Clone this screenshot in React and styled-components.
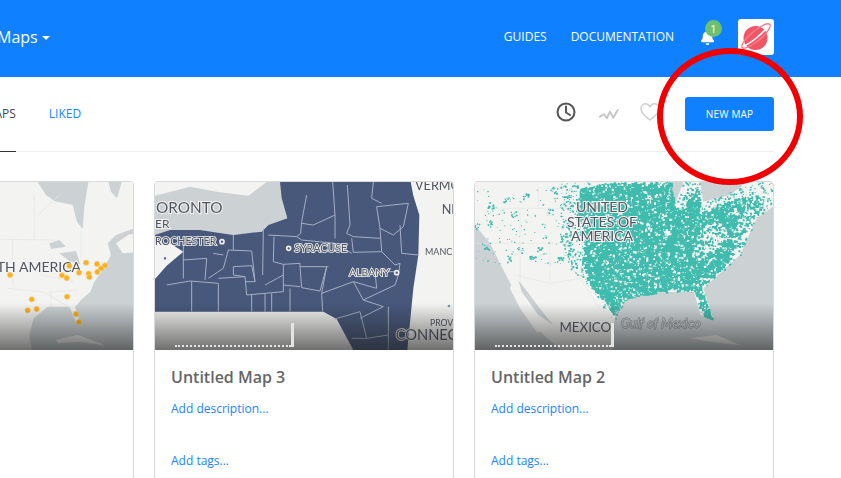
import React from 'react';
import styled, { createGlobalStyle } from 'styled-components';
import { FaBell } from 'react-icons/fa';

const GlobalStyle = createGlobalStyle`
  html, body {
    margin: 0;
    padding: 0;
    background: #fff;
    font-family: "Open Sans", "Liberation Sans", sans-serif;
  }
`;

const Page = styled.div`
  position: relative;
  width: 841px;
  height: 478px;
  overflow: hidden;
`;

const Header = styled.header`
  box-sizing: border-box;
  height: 77px;
  background: #0f80ff;
  display: flex;
  align-items: center;
  justify-content: space-between;
  padding: 0 67px 4px 0;
  color: #fff;
`;

const Brand = styled.div`
  display: flex;
  align-items: center;
  gap: 4px;
  margin-left: -3px;
  font-size: 16px;
`;

const Caret = styled.span`
  width: 0;
  height: 0;
  margin-top: 2px;
  border-left: 4px solid transparent;
  border-right: 4px solid transparent;
  border-top: 4px solid #fff;
`;

const Nav = styled.nav`
  display: flex;
  align-items: center;
`;

const NavLink = styled.a`
  font-size: 12px;
  font-weight: 500;
  margin-right: 24px;
`;

const Bell = styled.div`
  position: relative;
  width: 18px;
  height: 18px;
  margin: 2px 22px 0 0;
  font-size: 15px;
  display: flex;
  align-items: center;
  justify-content: center;
`;

const Badge = styled.span`
  position: absolute;
  top: -9px;
  left: 7px;
  width: 17px;
  height: 17px;
  border-radius: 50%;
  background: #6cc070;
  font-size: 11px;
  line-height: 17px;
  text-align: center;
`;

const Avatar = styled.div`
  width: 36px;
  height: 36px;
  border-radius: 3px;
  background: #fff;
  overflow: hidden;
`;

const Main = styled.main`
  width: 940px;
  margin-left: -166px;
`;

const TabBar = styled.div`
  height: 74px;
  display: flex;
  align-items: stretch;
  justify-content: space-between;
  border-bottom: 1px solid #eee;
`;

const Tabs = styled.div`
  display: flex;
  gap: 33px;
  padding-left: 129px;
`;

const Tab = styled.a`
  display: flex;
  align-items: center;
  height: 72px;
  padding-bottom: 2px;
  font-size: 12px;
  font-weight: 500;
  color: ${(p) => (p.$active ? '#444' : '#1a86ff')};
  border-bottom: 1px solid ${(p) => (p.$active ? '#333' : 'transparent')};
`;

const Tools = styled.div`
  display: flex;
  align-items: center;
  gap: 21px;
`;

const ToolIcon = styled.svg`
  width: 20px;
  height: 20px;
  margin-bottom: ${(p) => p.$lift || 0}px;
  margin-right: ${(p) => p.$after || 0}px;
  fill: none;
  stroke: ${(p) => p.$color};
  stroke-width: ${(p) => p.$weight};
  stroke-linecap: round;
  stroke-linejoin: round;
`;

const NewMap = styled.button`
  width: 89px;
  height: 34px;
  margin-left: 4px;
  border: 0;
  border-radius: 3px;
  background: #0f80ff;
  color: #fff;
  font-family: inherit;
  font-size: 10px;
  font-weight: 500;
  letter-spacing: 0.2px;
`;

const Grid = styled.div`
  display: grid;
  grid-template-columns: repeat(3, 300px);
  gap: 20px;
  margin-top: 29px;
`;

const Card = styled.article`
  box-sizing: border-box;
  height: 340px;
  border: 1px solid #d9d9d9;
  border-radius: 4px;
  overflow: hidden;
  background: #fff;
`;

const Thumb = styled.div`
  position: relative;
  height: 168px;
  overflow: hidden;
  &::after {
    content: '';
    position: absolute;
    inset: 0;
    background: linear-gradient(to bottom, transparent 72%, rgba(30, 30, 30, 0.62) 100%);
  }
`;

const MapArt = styled.svg`
  display: block;
  width: 298px;
  height: 168px;
  filter: blur(0.4px);
`;

const ScaleBar = styled.div`
  position: absolute;
  z-index: 1;
  left: 20px;
  bottom: 3px;
  width: 116px;
  height: 22px;
  border-bottom: 2px dotted #e4e4e4;
  &::after {
    content: '';
    position: absolute;
    right: -3px;
    top: 0;
    width: 3px;
    height: 24px;
    background: #e4e4e4;
  }
`;

const CardBody = styled.div`
  padding: 16px 16px 0;
`;

const Title = styled.h3`
  margin: 0;
  font-size: 16px;
  line-height: 22px;
  font-weight: 600;
  color: #666;
`;

const Meta = styled.a`
  display: block;
  margin-top: ${(p) => p.$gap}px;
  font-size: 12px;
  line-height: 16px;
  color: #1a86ff;
`;

const Ring = styled.div`
  position: absolute;
  left: 657px;
  top: 48px;
  box-sizing: border-box;
  width: 146px;
  height: 137px;
  border: 6px solid #f00000;
  border-radius: 50%;
`;

const labelStyle = {
  fontFamily: 'Lato, "Open Sans", sans-serif',
  paintOrder: 'stroke',
  stroke: '#f4f4f4',
  strokeWidth: 6,
  fill: '#50555f',
};

// small seeded generator so the dots land in the same place on each load
const makeRandom = (seed) => () => {
  seed = (seed * 16807) % 2147483647;
  return seed / 2147483647;
};

const inside = (x, y, poly) => {
  let hit = false;
  for (let i = 0, j = poly.length - 1; i < poly.length; j = i++) {
    const [xi, yi] = poly[i];
    const [xj, yj] = poly[j];
    if (yi > y !== yj > y && x < ((xj - xi) * (y - yi)) / (yj - yi) + xi) hit = !hit;
  }
  return hit;
};

const east = [
  [330, 40], [420, 21], [600, 21], [612, 100], [640, 90], [680, 40], [690, 110], [740, 95], [790, 70],
  [880, 60], [870, 100], [825, 160], [795, 235], [730, 300], [690, 335], [725, 430], [700, 420], [672, 345],
  [600, 340], [540, 355], [470, 365], [430, 415], [390, 365], [350, 310], [335, 265], [345, 180], [325, 90],
];
const land = [
  [270, 21], [600, 21], [612, 100], [640, 21], [690, 21], [700, 80], [830, 21], [905, 21], [905, 95],
  [860, 130], [810, 240], [700, 340], [730, 432], [692, 420], [672, 350], [545, 352], [470, 372], [430, 440],
  [370, 350], [300, 280], [270, 180],
];
const appalachia = [[700, 150], [740, 125], [775, 170], [740, 230], [680, 250], [660, 210]];

const westClusters = [
  [60, 90], [110, 70], [165, 65], [250, 45], [58, 145], [130, 115], [185, 245], [210, 225], [150, 225], [45, 215],
  [20, 155], [120, 250], [270, 255], [290, 235], [300, 150], [290, 70], [240, 110], [280, 190],
];

const buildSpeckle = () => {
  const rnd = makeRandom(4711);
  let teal = '';
  let gaps = '';
  const square = (x, y, s) => `M${x.toFixed(0)} ${y.toFixed(0)}h${s.toFixed(0)}v${s.toFixed(0)}h-${s.toFixed(0)}z`;
  for (let i = 0; i < 18000; i++) {
    const x = 260 + rnd() * 650;
    const y = 21 + rnd() * 420;
    if (!inside(x, y, land)) continue;
    if (inside(x, y, east)) {
      if (inside(x, y, appalachia) && rnd() < 0.75) continue;
      if (x > 780 && rnd() < 0.5) continue;
      teal += square(x, y, 3 + rnd() * 6);
    } else if (rnd() < 0.2) {
      teal += square(x, y, 2 + rnd() * 4);
    }
  }
  for (let i = 0; i < 900; i++) {
    const x = 320 + rnd() * 580;
    const y = 21 + rnd() * 400;
    if (inside(x, y, east)) gaps += square(x, y, 2 + rnd() * 5);
  }
  westClusters.forEach(([cx, cy]) => {
    for (let i = 0; i < 9; i++) teal += square(cx + rnd() * 20 - 10, cy + rnd() * 20 - 10, 2 + rnd() * 4);
  });
  for (let i = 0; i < 120; i++) teal += square(15 + rnd() * 260, 30 + rnd() * 240, 2 + rnd() * 2);
  return { teal, gaps };
};

const speckle = buildSpeckle();

const orangeDots = [
  [27, 300], [205, 273], [255, 263], [288, 267], [312, 271], [234, 293], [263, 296], [300, 280], [289, 291], [265, 306],
  [183, 301], [197, 309], [92, 373], [80, 406], [107, 402], [198, 365], [225, 417], [234, 441],
];

const NorthAmericaMap = () => (
  <MapArt viewBox="-498 21 894 504">
    <rect x="-498" y="21" width="894" height="504" fill="#f3f3f2" />
    <path fill="#ccd2d4" d="M110 21L135 60 160 78 215 90 228 140 245 162 250 95 262 21Z" />
    <path fill="#ccd2d4" d="M322 21L330 50 348 70 362 21Z" />
    <path fill="#ccd2d4" d="M400 232L365 235 345 205 385 178 400 178 400 160 345 180 320 205 330 240 305 285 280 320 268 350 240 375 222 395 238 445 225 440 205 395 140 395 98 430 85 480 92 525 400 525Z" />
    <path fill="#f3f3f2" d="M165 495L230 480 300 505 310 512 240 500 170 505Z" />
    <path fill="#ccd2d4" d="M145 205L175 195 195 215 150 222ZM175 235L225 228 238 268 205 258Z" />
    <path fill="none" stroke="#e4e4e4" strokeWidth="2" d="M-60 192L160 195M35 192V330M100 60V195M20 340L130 352 200 395M150 350V395M240 165V250M110 120L175 60M60 260L170 270M120 300L220 320M140 352L230 345" />
    <text x="240" y="290" fontSize="42" textAnchor="end" style={labelStyle}>NORTH AMERICA</text>
    {orangeDots.map(([x, y]) => (
      <circle key={`${x}-${y}`} cx={x} cy={y} r="8" fill="#f9b01f" stroke="#fbd07c" strokeWidth="2" />
    ))}
  </MapArt>
);

const NewYorkMap = () => (
  <MapArt viewBox="15 21 894 504">
    <rect x="15" y="21" width="894" height="504" fill="#f3f3f2" />
    <path fill="#ccd2d4" d="M15 62L120 35 200 50 295 62 350 21 395 21 395 70 412 130 355 150 330 172 250 180 150 165 60 165 15 195Z" />
    <path
      fill="#47587b"
      d="M390 21L782 21 790 62 808 120 805 240 790 340 772 525 610 525 560 432 520 410 15 410 15 312 50 272 100 230 60 205 15 200 15 180 60 165 150 165 250 180 335 170 355 150 412 130 395 70Z"
    />
    <path
      fill="none"
      stroke="#a6afc4"
      strokeWidth="3"
      d="M470 60L455 140 452 175 440 185M548 21L555 120V190M592 30L600 150 590 175 610 185M670 21L665 70 695 85M680 95L775 85 760 155 730 180 690 160 680 95M455 145L490 150 555 120M610 185L690 190M690 160L695 230 610 232 605 190M750 150L755 235 805 240M695 230L735 270 750 265M340 160L338 300M355 180L440 185 455 195 555 205 605 235M372 185L370 260 400 268 450 265 450 275 535 275M400 268V330L450 335M450 275L455 338 510 348 530 275M100 195V255L170 250 165 315M100 255V310M50 330L120 318 205 325V410M125 318V410M205 310L285 305 290 360 345 355V410M305 360V410M285 320H315L305 228 235 225 220 280 175 310M190 235L220 240M250 180V225M250 275L305 272 315 320M250 275V300L285 305M345 330L400 300M345 355L400 350V330M365 355V410M420 340V410M515 355L610 320 640 375 735 330M610 320L680 340M530 275L515 355 518 410M640 375L700 395 630 430M555 432L630 410 650 490 715 480M715 395V525M735 330L745 300 750 265M680 340L675 290 735 290M605 490L650 490"
    />
    <g fontSize="46" style={labelStyle}>
      <text x="18" y="113">ORONTO</text>
      <text x="15" y="158" fontSize="36">ER</text>
      <text x="15" y="211" fontSize="32" style={{ ...labelStyle, strokeWidth: 5 }}>ROCHESTER</text>
      <text x="433" y="231" fontSize="32" style={{ ...labelStyle, strokeWidth: 5 }}>SYRACUSE</text>
      <text x="598" y="304" fontSize="31" style={{ ...labelStyle, strokeWidth: 5 }}>ALBANY</text>
      <text x="795" y="44" fontSize="38">VERMONT</text>
      <text x="875" y="116" fontSize="38">NEW</text>
      <text x="825" y="240" fontSize="27" style={{ ...labelStyle, stroke: 'none' }}>MANCHESTER</text>
      <text x="840" y="452" fontSize="26" style={{ ...labelStyle, stroke: 'none' }}>PROVIDENCE</text>
      <text x="737" y="496" fontSize="44" style={{ ...labelStyle, strokeWidth: 5 }}>CONNECTICUT</text>
    </g>
    {[[216, 200], [45, 250], [416, 220], [740, 293]].map(([x, y]) => (
      <circle key={x} cx={x} cy={y} r="6" fill="#47587b" stroke="#f0f0f0" strokeWidth="5" />
    ))}
    <circle cx="897" cy="393" r="4" fill="#7f93a8" />
  </MapArt>
);

const UnitedStatesMap = () => (
  <MapArt viewBox="15 21 894 504">
    <rect x="15" y="21" width="894" height="504" fill="#f3f3f2" />
    <path fill="#ccd2d4" d="M909 95L860 130 810 240 700 340 730 432 692 420 672 350 545 352 470 372 440 400 432 445 428 525 909 525Z" />
    <path fill="#ccd2d4" d="M15 150L60 205 105 295 145 370 200 460 270 525 15 525Z" />
    <path fill="#f3f3f2" d="M130 315L160 380 215 470 200 470 150 400 120 340Z" />
    <path fill="#ccd2d4" d="M145 315L225 420 250 450 205 420 155 350Z" />
    <path fill="#ccd2d4" d="M600 21L612 100 625 60 640 21ZM690 21L700 80 780 60 830 21Z" />
    <path fill="#f3f3f2" d="M660 490L740 480 810 510 720 500Z" />
    <path fill="none" stroke="#e6e6e6" strokeWidth="2" d="M50 100H300M150 100V320M15 205H320M240 205V325M130 300L240 325 330 310 390 400M205 30V100" />
    <path fill="#3fbcad" d={speckle.teal} />
    <path fill="#f3f3f2" d={speckle.gaps} />
    <g fontSize="42" textAnchor="middle" style={labelStyle}>
      <text x="396" y="112">UNITED</text>
      <text x="396" y="155">STATES OF</text>
      <text x="396" y="199">AMERICA</text>
      <text x="346" y="472" fontSize="40">MEXICO</text>
    </g>
    <text x="572" y="459" fontSize="40" fontStyle="italic" textAnchor="middle" style={{ ...labelStyle, fill: '#c9ced4', stroke: '#808488', strokeWidth: 3 }}>
      Gulf of Mexico
    </text>
  </MapArt>
);

const maps = [
  { id: 4, title: 'Untitled Map 4', Art: NorthAmericaMap },
  { id: 3, title: 'Untitled Map 3', Art: NewYorkMap },
  { id: 2, title: 'Untitled Map 2', Art: UnitedStatesMap },
];

export default function App() {
  return (
    <Page>
      <GlobalStyle />
      <Header>
        <Brand>
          Maps <Caret />
        </Brand>
        <Nav>
          <NavLink>GUIDES</NavLink>
          <NavLink>DOCUMENTATION</NavLink>
          <Bell>
            <FaBell />
            <Badge>1</Badge>
          </Bell>
          <Avatar>
            <svg viewBox="0 0 36 36" width="36" height="36">
              <circle cx="17.5" cy="19" r="12" fill="#f25566" />
              <ellipse cx="18" cy="17" rx="18" ry="5" transform="rotate(-40 18 17)" fill="none" stroke="#f6808c" strokeWidth="1.4" />
              <path d="M6 27C13 24 24 15 29.5 8" fill="none" stroke="#fff" strokeWidth="1.6" />
            </svg>
          </Avatar>
        </Nav>
      </Header>
      <Main>
        <TabBar>
          <Tabs>
            <Tab $active>MY MAPS</Tab>
            <Tab>LIKED</Tab>
          </Tabs>
          <Tools>
            <ToolIcon viewBox="0 0 20 20" $color="#555" $weight="2" $lift={5} $after={2}>
              <circle cx="10" cy="10" r="8.5" />
              <path d="M10 4.5V10.5L14 13" />
            </ToolIcon>
            <ToolIcon viewBox="0 0 20 20" $color="#c8c8c8" $weight="2">
              <path d="M1 12.7L5 10.3 7.7 14.3 11 7.7 14.3 13.7 18.7 6" />
            </ToolIcon>
            <ToolIcon viewBox="0 0 20 20" $color="#cfcfcf" $weight="1.5" $lift={5}>
              <path d="M10 18C5 14 1 11 1 6.5 1 3.5 3.3 1.8 5.5 1.8 7.5 1.8 9 3 10 4.8 11 3 12.5 1.8 14.5 1.8 16.7 1.8 19 3.5 19 6.5 19 11 15 14 10 18Z" />
            </ToolIcon>
            <NewMap>NEW MAP</NewMap>
          </Tools>
        </TabBar>
        <Grid>
          {maps.map(({ id, title, Art }) => (
            <Card key={id}>
              <Thumb>
                <Art />
                <ScaleBar />
              </Thumb>
              <CardBody>
                <Title>{title}</Title>
                <Meta $gap={13}>Add description...</Meta>
                <Meta $gap={36}>Add tags...</Meta>
              </CardBody>
            </Card>
          ))}
        </Grid>
      </Main>
      <Ring />
    </Page>
  );
}
